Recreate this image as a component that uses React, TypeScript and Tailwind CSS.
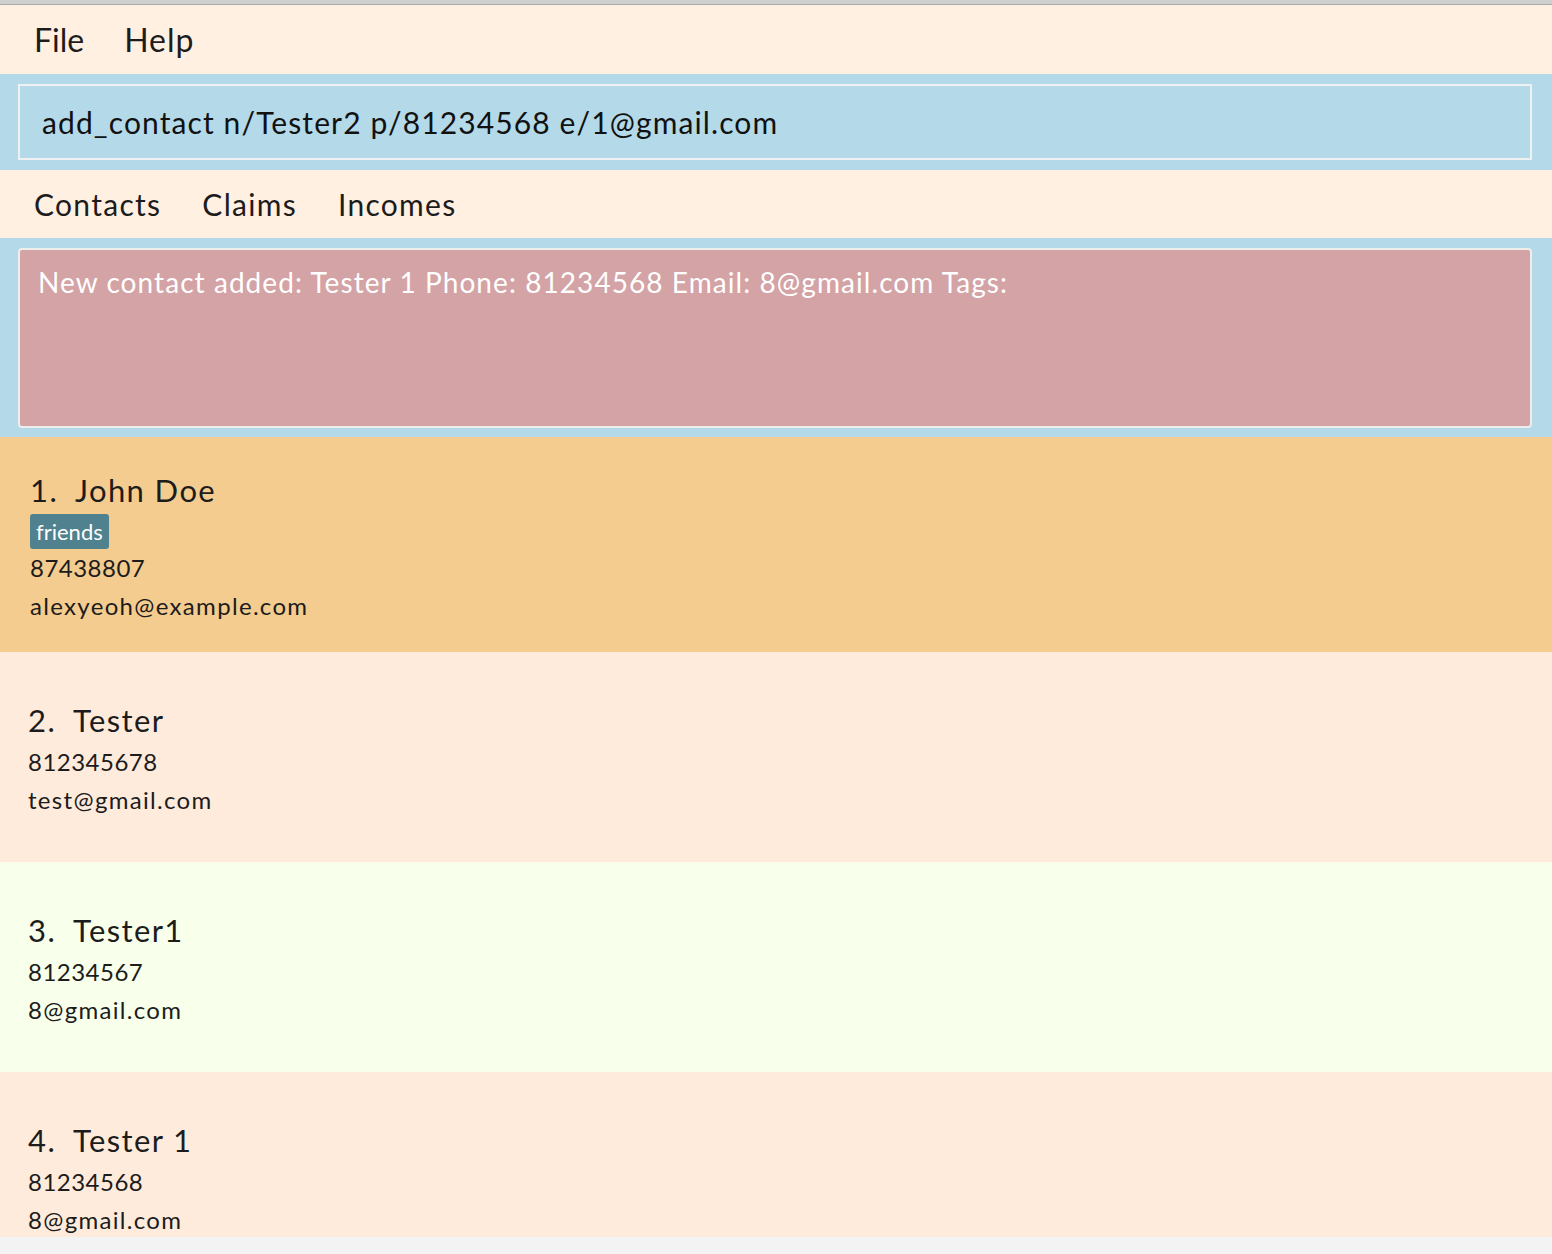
import React from "react";

const font = { fontFamily: "Lato, 'Noto Sans', sans-serif" };

type Contact = { idx: number; name: string; tags?: string[]; phone: string; email: string; bg: string; first?: boolean };

const contacts: Contact[] = [
  { idx: 1, name: "John Doe", tags: ["friends"], phone: "87438807", email: "alexyeoh@example.com", bg: "bg-[#f4cc8f]", first: true },
  { idx: 2, name: "Tester", phone: "812345678", email: "test@gmail.com", bg: "bg-[#ffebdb]" },
  { idx: 3, name: "Tester1", phone: "81234567", email: "8@gmail.com", bg: "bg-[#f8ffea]" },
  { idx: 4, name: "Tester 1", phone: "81234568", email: "8@gmail.com", bg: "bg-[#ffebdb]" },
];

function Card({ c }: { c: Contact }) {
  return (
    <div
      className={`${c.bg} shrink-0 flex flex-col ${c.first ? "h-[215px] pt-[33px] pl-[30px]" : "h-[210px] pt-[48px] pl-[28px]"} text-[#1c1c1c]`}
    >
      <div className="h-[40px] flex items-center text-[31px] tracking-[0.045em]">
        <span className="w-[45px]">{c.idx}.</span>
        <span>{c.name}</span>
      </div>
      {c.tags && (
        <div className="flex gap-2 mt-[4px]">
          {c.tags.map((t) => (
            <span key={t} className="h-[35px] px-[6px] flex items-center rounded-[3px] bg-[#4f818e] text-white text-[22px]">
              {t}
            </span>
          ))}
        </div>
      )}
      <div className={`h-[38px] flex items-center text-[24px] tracking-[0.02em] ${c.tags ? "" : "mt-[3px]"}`}>{c.phone}</div>
      <div className="h-[38px] flex items-center text-[24px] tracking-[0.055em]">{c.email}</div>
    </div>
  );
}

export default function App() {
  return (
    <div className="w-[1552px] h-[1254px] bg-[#f3f3f3] flex flex-col overflow-hidden" style={font}>
      <div className="h-[5px] shrink-0 bg-[#cfcfcf] border-b border-[#a9a9a9]" />
      <div className="h-[69px] shrink-0 bg-[#fff0e2] flex items-center pl-[34px] gap-[40px] text-[32px] text-[#1c1c1c]">
        <span>File</span>
        <span className="tracking-[0.03em]">Help</span>
      </div>
      <div className="h-[96px] shrink-0 bg-[#b4d9e8] pt-[10px] pl-[18px] pr-[20px]">
        <div className="h-[76px] border-2 border-[#eef1ef] flex items-center pl-[22px] text-[30px] text-[#111] tracking-[0.037em]">
          add_contact n/Tester2 p/81234568 e/1@gmail.com
        </div>
      </div>
      <div className="h-[68px] shrink-0 bg-[#fff0e2] flex items-center pl-[34px] gap-[41px] text-[30px] text-[#1c1c1c] tracking-[0.043em]">
        <span>Contacts</span>
        <span>Claims</span>
        <span>Incomes</span>
      </div>
      <div className="h-[199px] shrink-0 bg-[#b4d9e8] pt-[10px] pl-[18px] pr-[20px]">
        <div className="h-[180px] border-2 border-[#eeeeec] rounded-[4px] bg-[#d3a3a5] pl-[18px] pt-[11px] text-[28px] text-white tracking-[0.038em]">
          New contact added: Tester 1 Phone: 81234568 Email: 8@gmail.com Tags:
        </div>
      </div>
      <div className="h-[800px] shrink-0 overflow-hidden flex flex-col">
        {contacts.map((c) => (
          <Card key={c.idx} c={c} />
        ))}
      </div>
    </div>
  );
}
